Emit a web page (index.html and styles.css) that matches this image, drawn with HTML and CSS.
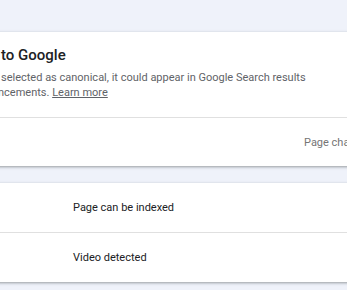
FILE: index.html
```html
<!DOCTYPE html>
<html>
<head>
<meta charset="utf-8">
<link rel="stylesheet" href="styles.css">
</head>
<body>
<div class="page">
  <section class="card">
    <div class="summary">
      <h2 class="title">to Google</h2>
      <p class="desc">selected as canonical, it could appear in Google Search results<br><span class="clip">ncements.</span> <a class="link" href="#">Learn more</a></p>
    </div>
    <div class="footer">
      <span class="hint">Page changed? Request indexing</span>
    </div>
  </section>
  <section class="card">
    <div class="row"><span class="label">Page can be indexed</span></div>
    <div class="row"><span class="label">Video detected</span></div>
  </section>
</div>
</body>
</html>
```
FILE: styles.css
```css
html, body {
  margin: 0;
  padding: 0;
}
body {
  background: #eff2fa;
  font-family: Roboto, "Noto Sans", Arial, sans-serif;
  overflow: hidden;
  width: 347px;
  height: 290px;
}
.page {
  padding-top: 32px;
  display: flex;
  flex-direction: column;
  gap: 17px;
  margin: 0 -12px;
}
.card {
  background: #fff;
  box-shadow: 0 1px 2px rgba(60, 64, 67, 0.35), 0 1px 3px 1px rgba(60, 64, 67, 0.12);
}
.summary {
  padding: 13px 0 17px 13px;
  border-bottom: 1px solid #e0e0e0;
}
.title {
  margin: 0;
  font-size: 15px;
  line-height: 20px;
  font-weight: 500;
  color: #202124;
}
.desc {
  margin: 5px 0 0;
  font-size: 11px;
  line-height: 15px;
  color: #5f6368;
  white-space: nowrap;
}
.clip {
  margin-left: -3px;
}
.link {
  color: #5f6368;
  text-decoration: underline;
}
.footer {
  height: 48px;
  display: flex;
  align-items: center;
  padding-left: 316px;
  white-space: nowrap;
}
.hint {
  font-size: 11px;
  color: #757575;
}
.row {
  height: 49px;
  display: flex;
  align-items: center;
  padding-left: 85px;
}
.row + .row {
  border-top: 1px solid #e0e0e0;
}
.label {
  font-size: 11px;
  color: #202124;
}
```
